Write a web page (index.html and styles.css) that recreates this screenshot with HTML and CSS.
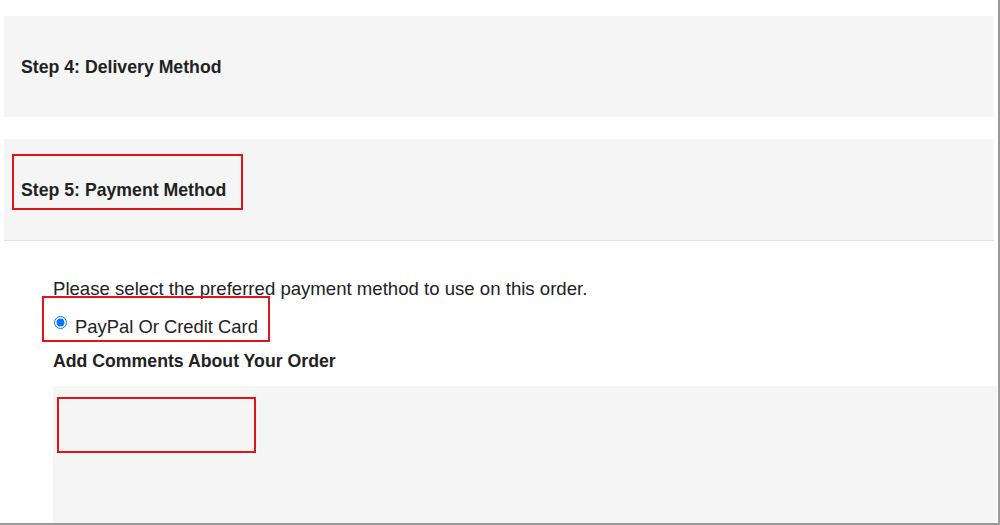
FILE: index.html
```html
<!DOCTYPE html>
<html lang="en">
<head>
  <meta charset="UTF-8">
  <meta name="viewport" content="width=device-width, initial-scale=1.0">
  <title>Checkout</title>
  <link rel="stylesheet" href="styles.css">
</head>
<body>
  <div class="checkout">
    <div class="step">
      <h4 class="step-title">Step 4: Delivery Method</h4>
    </div>

    <div class="step step-active">
      <h4 class="step-title marked">Step 5: Payment Method</h4>
    </div>

    <div class="step-body">
      <p class="hint">Please select the preferred payment method to use on this order.</p>
      <label class="radio marked">
        <input type="radio" name="payment" checked>
        <span>PayPal Or Credit Card</span>
      </label>
      <h5 class="comments-title">Add Comments About Your Order</h5>
      <div class="comments">
        <textarea></textarea>
        <span class="mark-box"></span>
      </div>
    </div>
  </div>
</body>
</html>
```

FILE: styles.css
```css
body {
  margin: 0;
  font-family: "Liberation Sans", Arial, sans-serif;
  color: #222;
  background: #fff;
}

.checkout {
  height: 525px;
  box-sizing: border-box;
  border-right: 2px solid #9a9a9a;
  border-bottom: 2px solid #9a9a9a;
  overflow: hidden;
}

.step {
  display: flex;
  align-items: center;
  height: 101px;
  margin: 16px 4px 0 4px;
  padding-left: 17px;
  background: #f5f5f5;
}

.step + .step {
  margin-top: 22px;
}

.step-active {
  border-bottom: 1px solid #e2e2e2;
}

.step-title {
  margin: 0;
  font-size: 17.7px;
  line-height: 20px;
  font-weight: bold;
}

.marked {
  position: relative;
}

.step-title.marked::after {
  content: "";
  position: absolute;
  left: -9px;
  right: -17px;
  top: -26px;
  bottom: -10px;
  border: 2px solid #e0141a;
}

.step-body {
  padding: 36px 0 0 53px;
}

.hint {
  margin: 0;
  font-size: 18.6px;
  line-height: 24px;
}

.radio {
  display: flex;
  align-items: center;
  width: max-content;
  height: 22px;
  margin-top: 15px;
  font-size: 18.4px;
}

.radio input {
  margin: 0 8px 0 1px;
  width: 13px;
  height: 13px;
  position: relative;
  top: -5px;
}

.radio.marked::after {
  content: "";
  position: absolute;
  left: -11px;
  right: -12px;
  top: -20px;
  bottom: -4px;
  border: 2px solid #e0141a;
}

.comments-title {
  margin: 13px 0 0 0;
  font-size: 17.7px;
  line-height: 20px;
  font-weight: bold;
}

.comments {
  position: relative;
  margin-top: 15px;
  margin-right: 1px;
}

.comments textarea {
  display: block;
  width: 100%;
  height: 160px;
  box-sizing: border-box;
  border: none;
  background: #f5f5f5;
  border-radius: 4px 0 0 0;
  resize: none;
}

.mark-box {
  position: absolute;
  left: 4px;
  top: 11px;
  width: 199px;
  height: 56px;
  box-sizing: border-box;
  border: 2px solid #e0141a;
}
```
